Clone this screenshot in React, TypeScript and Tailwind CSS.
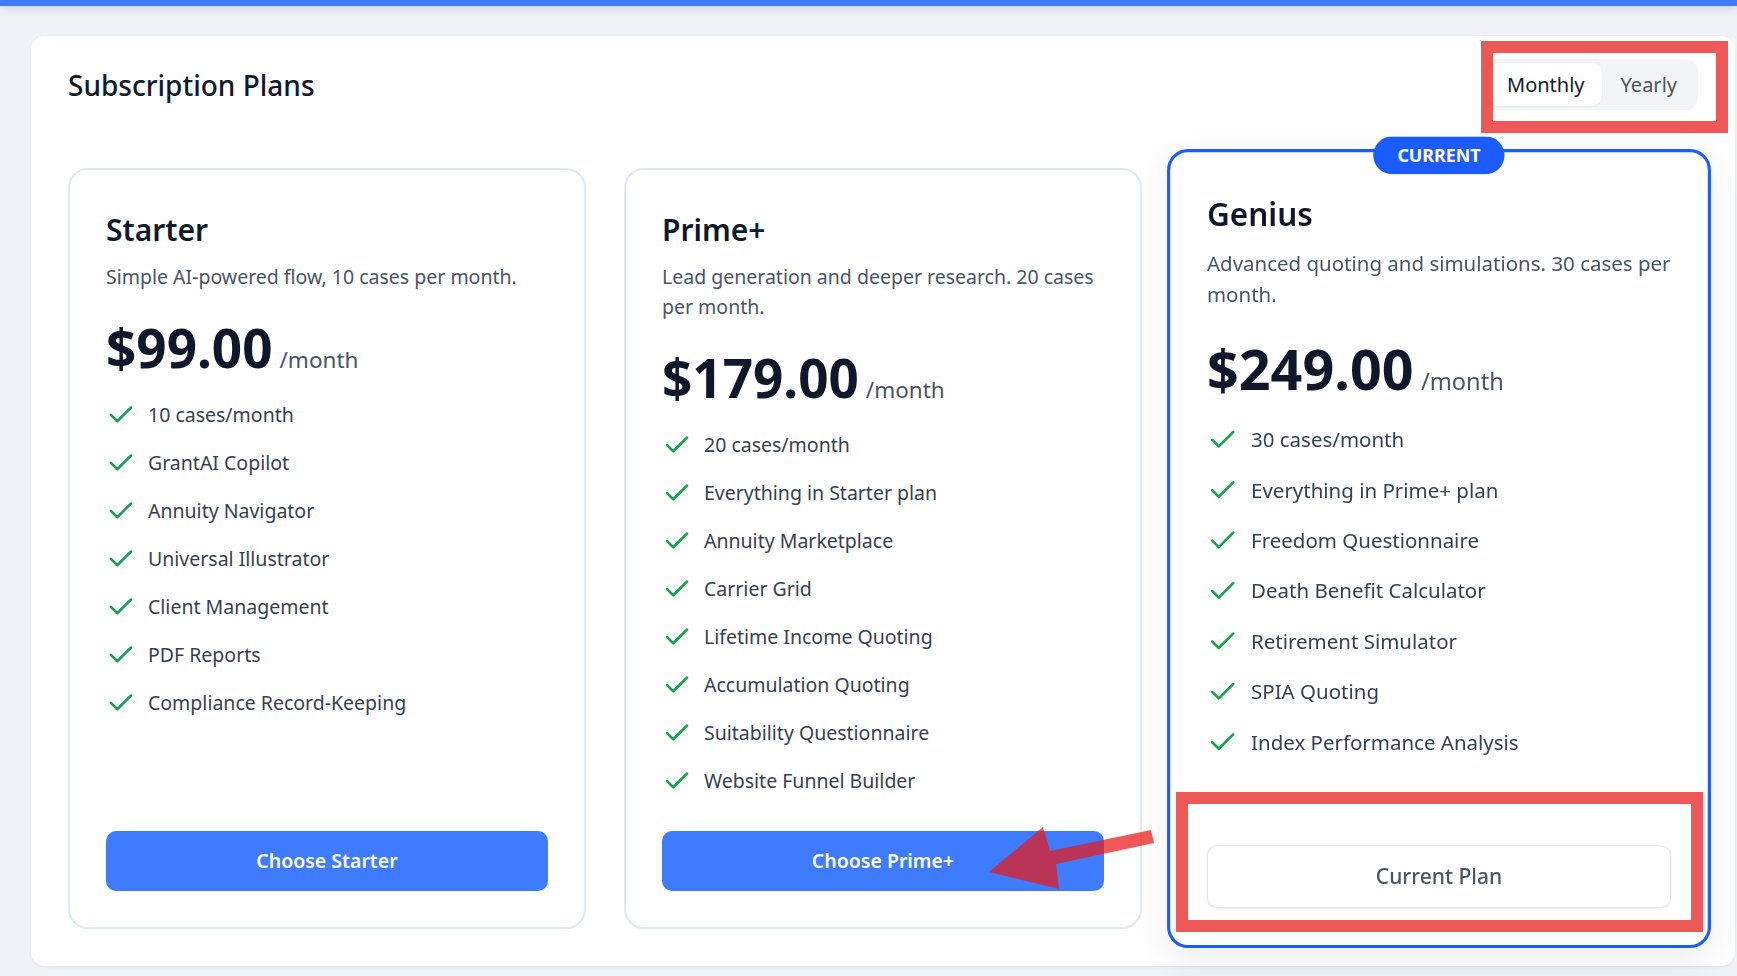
import React, { useState } from 'react';
import { Check } from 'lucide-react';

type Plan = {
  name: string;
  desc: string;
  price: string;
  features: string[];
  current?: boolean;
};

const plans: Plan[] = [
  {
    name: 'Starter',
    desc: 'Simple AI-powered flow, 10 cases per month.',
    price: '$99.00',
    features: [
      '10 cases/month',
      'GrantAI Copilot',
      'Annuity Navigator',
      'Universal Illustrator',
      'Client Management',
      'PDF Reports',
      'Compliance Record-Keeping',
    ],
  },
  {
    name: 'Prime+',
    desc: 'Lead generation and deeper research. 20 cases per month.',
    price: '$179.00',
    features: [
      '20 cases/month',
      'Everything in Starter plan',
      'Annuity Marketplace',
      'Carrier Grid',
      'Lifetime Income Quoting',
      'Accumulation Quoting',
      'Suitability Questionnaire',
      'Website Funnel Builder',
    ],
  },
  {
    name: 'Genius',
    desc: 'Advanced quoting and simulations. 30 cases per month.',
    price: '$249.00',
    features: [
      '30 cases/month',
      'Everything in Prime+ plan',
      'Freedom Questionnaire',
      'Death Benefit Calculator',
      'Retirement Simulator',
      'SPIA Quoting',
      'Index Performance Analysis',
    ],
    current: true,
  },
];

function PlanCard({ plan }: { plan: Plan }) {
  const cardCls = plan.current
    ? 'relative flex flex-col rounded-[20px] border-[3px] border-[#1a5cff] bg-white p-[35px] scale-105 shadow-[0_10px_30px_rgba(15,23,42,0.08)]'
    : 'relative flex flex-col rounded-[20px] border-2 border-[#e2e8f0] bg-white p-[36px]';

  return (
    <div className={cardCls}>
      {plan.current && (
        <div className="absolute left-1/2 top-[-15px] -translate-x-1/2 rounded-full bg-[#1a5cff] px-[23px] py-[5px] text-[17px] font-bold leading-[26px] text-white">
          CURRENT
        </div>
      )}
      <h3 className="mt-[4px] text-[30px] font-semibold leading-[40px] text-[#0f172a]">{plan.name}</h3>
      <p className="mt-[12px] text-[19.5px] leading-[30px] text-[#475569]">{plan.desc}</p>
      <div className="mt-[29px] flex items-baseline">
        <span className="text-[53px] font-bold leading-none text-[#0f172a]">{plan.price}</span>
        <span className="ml-[7px] text-[22.5px] text-[#475569]">/month</span>
      </div>
      <ul className="mt-[23px] flex flex-1 flex-col gap-[18px]">
        {plan.features.map((f) => (
          <li key={f} className="flex items-start gap-[12px] text-[19.5px] leading-[30px] text-[#334155]">
            <Check size={30} strokeWidth={2} className="shrink-0 text-[#16a34a]" />
            <span>{f}</span>
          </li>
        ))}
      </ul>
      {plan.current ? (
        <button
          type="button"
          className="mt-[35px] h-[60px] w-full rounded-[10px] border border-[#e5e7eb] bg-white text-[20px] font-medium text-[#4b5563] shadow-[0_1px_2px_rgba(0,0,0,0.04)]"
        >
          Current Plan
        </button>
      ) : (
        <button
          type="button"
          className="mt-[35px] h-[60px] w-full rounded-[10px] bg-[#3e7bff] text-[19.5px] font-semibold text-white"
        >
          Choose {plan.name}
        </button>
      )}
    </div>
  );
}

export default function App() {
  const [period, setPeriod] = useState<'monthly' | 'yearly'>('monthly');

  return (
    <div className="relative min-h-screen overflow-hidden bg-[#eff2f7] font-['Noto_Sans',sans-serif]">
      <div className="h-[6px] bg-[#3e7bff] shadow-[0_2px_10px_rgba(15,23,42,0.18)]" />

      <div className="pl-[31px] pr-[2px] pt-[30px]">
        <div className="rounded-[14px] bg-white px-[37px] pb-[37px] pt-[23px] shadow-[0_1px_3px_rgba(15,23,42,0.06)]">
          <div className="flex h-[51px] items-center justify-between">
            <h2 className="text-[28px] font-medium text-[#111827]">Subscription Plans</h2>
            <div className="flex rounded-[12px] bg-[#f3f4f6] p-[4px]">
              <button
                type="button"
                onClick={() => setPeriod('monthly')}
                className={
                  period === 'monthly'
                    ? 'h-[43px] rounded-[10px] bg-white pl-[19px] pr-[17px] text-[20px] text-[#111827] shadow-[0_1px_2px_rgba(0,0,0,0.06)]'
                    : 'h-[43px] rounded-[10px] pl-[19px] pr-[17px] text-[20px] text-[#4b5563]'
                }
              >
                Monthly
              </button>
              <button
                type="button"
                onClick={() => setPeriod('yearly')}
                className={
                  period === 'yearly'
                    ? 'h-[43px] rounded-[10px] bg-white pl-[19px] pr-[17px] text-[20px] text-[#111827] shadow-[0_1px_2px_rgba(0,0,0,0.06)]'
                    : 'h-[43px] rounded-[10px] pl-[19px] pr-[17px] text-[20px] text-[#4b5563]'
                }
              >
                Yearly
              </button>
            </div>
          </div>

          <div className="mt-[58px] grid grid-cols-3 gap-[38px]">
            {plans.map((p) => (
              <PlanCard key={p.name} plan={p} />
            ))}
          </div>
        </div>
      </div>

      {/* review annotations */}
      <div className="pointer-events-none absolute left-[1481px] top-[41px] z-20 h-[92px] w-[247px] border-[12px] border-[rgba(232,26,23,0.73)]" />
      <div className="pointer-events-none absolute left-[1176px] top-[792px] z-20 h-[140px] w-[527px] border-[12px] border-[rgba(232,26,23,0.73)]" />
      <svg className="pointer-events-none absolute left-0 top-0 z-20" width="1737" height="976">
        <polygon
          points="1151,830 1154,843 1056,864 1059,889 989,872 1043,827 1050,851"
          fill="rgba(232,26,23,0.73)"
        />
      </svg>
    </div>
  );
}
